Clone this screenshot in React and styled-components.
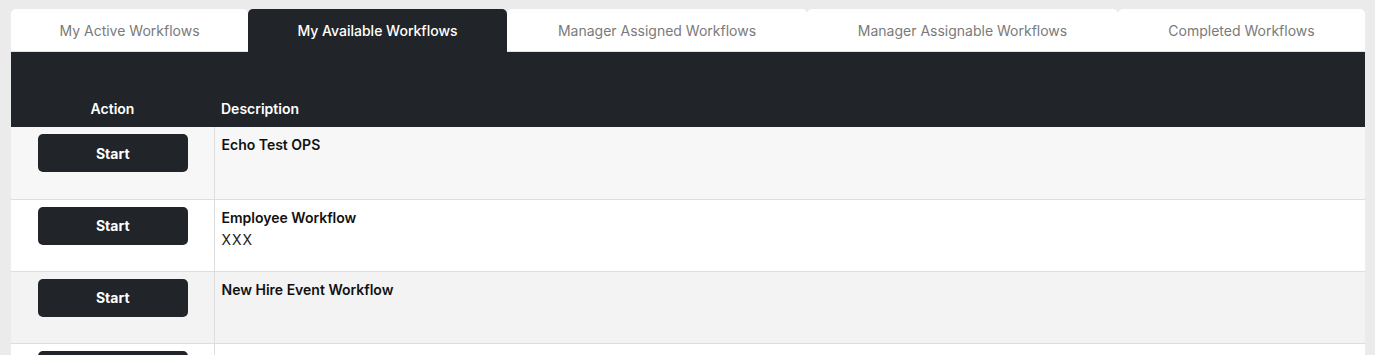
import React from "react";
import styled, { createGlobalStyle } from "styled-components";

const GlobalStyle = createGlobalStyle`
  html, body {
    margin: 0;
    padding: 0;
    background: #ebebeb;
    font-family: "Inter", "Open Sans", sans-serif;
    font-size: 14px;
    color: #212529;
  }
`;

const tabs = [
  { label: "My Active Workflows", width: 237 },
  { label: "My Available Workflows", width: 259 },
  { label: "Manager Assigned Workflows", width: 300 },
  { label: "Manager Assignable Workflows", width: 311 },
  { label: "Completed Workflows", width: 247 },
];

const workflows = [
  { title: "Echo Test OPS", shade: "#f7f7f7" },
  { title: "Employee Workflow", note: "XXX", shade: "#ffffff" },
  { title: "New Hire Event Workflow", shade: "#f3f3f3" },
  { title: "", shade: "#ffffff" },
];

function App() {
  const [active, setActive] = React.useState(1);

  return (
    <>
      <GlobalStyle />
      <Page>
        <TabBar>
          {tabs.map((t, i) => (
            <Tab
              key={t.label}
              $width={t.width}
              $active={active === i}
              onClick={() => setActive(i)}
            >
              {t.label}
            </Tab>
          ))}
        </TabBar>
        <Table>
          <thead>
            <tr>
              <HeadCell $center>Action</HeadCell>
              <HeadCell>Description</HeadCell>
            </tr>
          </thead>
          <tbody>
            {workflows.map((w, i) => (
              <Row key={i} $shade={w.shade}>
                <ActionCell>
                  <StartButton>Start</StartButton>
                </ActionCell>
                <DescCell>
                  {w.title && <Title>{w.title}</Title>}
                  {w.note && <Note>{w.note}</Note>}
                </DescCell>
              </Row>
            ))}
          </tbody>
        </Table>
      </Page>
    </>
  );
}

const Page = styled.div`
  padding: 9px 10px 0 11px;
  height: 355px;
  box-sizing: border-box;
  overflow: hidden;
`;

const TabBar = styled.div`
  display: flex;
  width: 1354px;
`;

const Tab = styled.div`
  flex: 0 0 ${(p) => p.$width}px;
  height: 43px;
  padding-top: 1px;
  display: flex;
  align-items: center;
  justify-content: center;
  box-sizing: border-box;
  border-radius: 5px 5px 0 0;
  background: ${(p) => (p.$active ? "#212529" : "#ffffff")};
  color: ${(p) => (p.$active ? "#ffffff" : "#7a7a7a")};
  font-weight: ${(p) => (p.$active ? 500 : 400)};
  border-bottom: 1px solid ${(p) => (p.$active ? "#212529" : "#dee2e6")};
  cursor: pointer;
`;

const Table = styled.table`
  width: 1354px;
  border-collapse: collapse;
  table-layout: fixed;
`;

const HeadCell = styled.th`
  height: 75px;
  box-sizing: border-box;
  background: #212529;
  color: #ffffff;
  font-weight: 600;
  text-align: ${(p) => (p.$center ? "center" : "left")};
  vertical-align: bottom;
  padding: 0 7px 8px;
  line-height: 20px;
  width: ${(p) => (p.$center ? "203px" : "auto")};
`;

const Row = styled.tr`
  background: ${(p) => p.$shade};
  border-bottom: 1px solid #dedede;
`;

const ActionCell = styled.td`
  height: 72px;
  padding: 7px 0 0 1px;
  box-sizing: border-box;
  text-align: center;
  vertical-align: top;
  border-right: 1px solid #dedede;
`;

const DescCell = styled.td`
  height: 72px;
  padding: 7px 7px 0;
  box-sizing: border-box;
  vertical-align: top;
`;

const StartButton = styled.button`
  width: 150px;
  height: 38px;
  border: none;
  border-radius: 5px;
  background: #212529;
  color: #ffffff;
  font-family: "Inter", sans-serif;
  font-size: 14px;
  font-weight: 700;
  cursor: pointer;
`;

const Title = styled.div`
  font-weight: 600;
  line-height: 20px;
  margin-top: 1px;
  color: #111;
`;

const Note = styled.div`
  line-height: 20px;
  margin-top: 2px;
  letter-spacing: 1px;
  color: #222;
`;

export default App;
